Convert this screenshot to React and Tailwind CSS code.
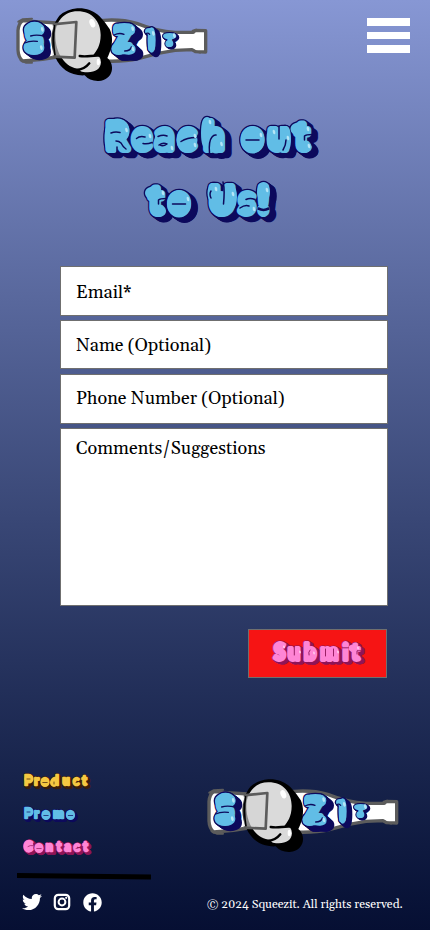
import React, { useId } from 'react';
import { FaTwitter, FaFacebook } from 'react-icons/fa';

const BLUE = { fill: '#61bde6', edge: '#0d0a5c', shine: '#b5e5f7' };
const PINK = { fill: '#ff85d5', edge: '#8f1457', shine: '#ffd0f0' };
const GOLD = { fill: '#f5c842', edge: '#3b1d0a', shine: '#ffedb0' };

// Inflated lettering: a dropped shadow, a dark rim and a swollen face.
// `at` holds the centre of each character, `puffs` the balloon bellies
// [cx, cy, rx, ry] and `creases` the folds drawn over the face.
function Bubble({ text, at, y, size, swell, rim, drop, colors, squash = 0.9, puffs = [], creases, crease = 1.5 }) {
  const id = useId();
  const href = `#${id}`;
  return (
    <g strokeLinejoin="round" strokeLinecap="round">
      <g fill={colors.edge} stroke={colors.edge} strokeWidth={swell + rim}>
        {[1, 0.75, 0.5, 0.25, 0].map((s) => (
          <use key={s} href={href} x={drop * s} y={drop * s * 0.75} />
        ))}
      </g>
      <use href={href} fill={colors.fill} stroke={colors.fill} strokeWidth={swell} />
      <defs>
        <g id={id}>
          {puffs.map(([cx, cy, rx, ry]) => (
            <ellipse key={`${cx}-${cy}`} cx={cx} cy={cy} rx={rx - swell / 2} ry={ry - swell / 2} />
          ))}
          <text
            x={at.map((v) => v / squash).join(' ')}
            y={y}
            transform={`scale(${squash} 1)`}
            textAnchor="middle"
            fontSize={size}
            className='font-["Lato","Open_Sans",sans-serif] font-black'
          >
            {text}
          </text>
        </g>
      </defs>
      {creases && <path d={creases} fill="none" stroke={colors.edge} strokeWidth={crease} />}
    </g>
  );
}

function Shine({ points, color, r = 1.6 }) {
  return points.map(([x, y]) => (
    <ellipse key={`${x}-${y}`} cx={x} cy={y} rx={r} ry={r * 1.8} fill={color} transform={`rotate(-14 ${x} ${y})`} />
  ));
}

function Logo() {
  return (
    <svg viewBox="45 21 582 225" className="block h-[75px] w-[194px]" role="img">
      <path d="M68 62 Q120 66 170 69 L310 61 Q365 57 410 70 Q470 94 525 97 L580 97 L586 91 L617 92 L617 156 L586 155 L576 149 L525 151 Q470 158 415 176 Q370 186 310 183 L170 171 Q120 181 68 183 Q55 172 54 150 L54 92 Q56 68 68 62Z" fill="#fff" stroke="#5c5c5c" strokeWidth="10" strokeLinejoin="round" />
      <path d="M55 65 L68 58 L96 56 M62 181 L78 188 L96 188 M578 92 L590 89 M576 150 L600 158" fill="none" stroke="#5c5c5c" strokeWidth="6" strokeLinecap="round" />
      <Bubble text="S" at={[102]} y={151} size={97} swell={26} rim={8} drop={16} colors={BLUE} squash={0.82}
        puffs={[[103, 89, 31, 22], [102, 143, 31, 22]]} crease={4}
        creases="M92 108Q108 103 132 108M74 129Q90 121 112 124" />
      <Bubble text="Z" at={[369]} y={150} size={90} swell={26} rim={8} drop={19} colors={BLUE} squash={0.82}
        puffs={[[373, 89, 33, 20], [356, 146, 22, 19], [386, 148, 21, 16]]} crease={4}
        creases="M342 105Q358 97 372 103M374 153Q391 153 394 141" />
      <Bubble text="I" at={[454]} y={146} size={64} swell={12} rim={8} drop={13} colors={BLUE} squash={0.9}
        puffs={[[448, 94, 13, 10], [455, 120, 12, 38]]} crease={4} creases="M437 101Q444 97 449 103" />
      <Bubble text="T" at={[509]} y={133} size={34} swell={10} rim={6} drop={6} colors={BLUE} squash={0.95}
        puffs={[[509, 108, 20, 9], [508, 131, 12, 10]]} />
      <path d="M232 25 C284 23 306 54 329 87 C345 121 330 158 322 174 C346 193 341 240 296 243 Q269 244 254 226 C211 228 181 207 166 172 C145 126 155 76 178 47 Q202 27 232 25Z" fill="#000" />
      <path d="M232 34 C278 34 302 66 302 105 C302 138 289 153 280 165 Q302 163 303 187 C301 213 278 220 246 215 Q237 212 240 206 C197 207 166 160 166 106 C166 64 193 34 232 34Z" fill="#dadada" />
      <path d="M239 168 C263 172 276 165 300 167 M228 211 C246 209 258 203 268 190" fill="none" stroke="#000" strokeWidth="7" strokeLinecap="round" />
      <ellipse cx="277" cy="70" rx="8" ry="13" fill="#fff" transform="rotate(-22 277 70)" />
      <ellipse cx="295" cy="186" rx="5" ry="10" fill="#fff" />
      <path d="M158 73 L229 66 L224 173 L158 170" fill="#d4d4d4" fillOpacity=".65" stroke="#5c5c5c" strokeWidth="8" strokeLinejoin="round" />
      <path d="M164 75 Q157 120 165 166" stroke="#000" strokeWidth="5" fill="none" />
      <Shine points={[[127, 88], [124, 143], [398, 86], [399, 147], [460, 100], [523, 107]]} color={BLUE.shine} r={4} />
    </svg>
  );
}

function Field({ label, box }) {
  return <label className={`block border border-[#6f6f6f] bg-white px-[15px] text-[18px] text-black ${box}`}>{label}</label>;
}

function NavWord({ text, at, colors, puffs, creases }) {
  return (
    <a className="block">
      <svg width="80" height="33" viewBox="20 768 80 33" className="block">
        <Bubble text={text} at={at} y={785.5} size={14} swell={2.4} rim={1.1} drop={2.2} colors={colors} puffs={puffs} creases={creases} crease={0.7} />
      </svg>
    </a>
  );
}

export default function App() {
  return (
    <div className='flex h-[930px] w-[430px] flex-col bg-linear-to-b from-[#8797d4] to-[#060f33] font-["Georgia","Gelasio","Liberation_Serif",serif]'>
      <header className="flex h-[108px] items-start justify-between pt-[7px] pr-5 pl-[15px]">
        <Logo />
        <button className="mt-[11px] flex w-[43px] flex-col gap-[6px]" aria-label="Menu">
          <span className="h-[7.5px] w-full bg-white" />
          <span className="h-[7.5px] w-full bg-white" />
          <span className="h-[7.5px] w-full bg-white" />
        </button>
      </header>

      <h1 className="h-[158px]">
        <svg width="430" height="124" viewBox="0 108 430 124" className="block">
          <Bubble text="Reach" at={[117, 142, 164.5, 187, 214]} y={149} size={36} swell={8} rim={2.6} drop={5.5} colors={BLUE}
            puffs={[[117.5, 131, 12, 12.5], [111, 138, 6.5, 14], [142, 140, 10.5, 13], [164, 140, 9.5, 13], [187, 140, 10.5, 13], [216, 141, 8, 12.5], [207, 133, 6, 16]]}
            creases="M111 133Q115 131.5 120 132.5M116 141Q119 141 121 143Q123 147 126 149M117 147V153M136.5 138.5Q140 135.5 145 137M143 143.5Q147 144.5 152 142.5M158 136.5Q163 134.5 167 136M159 145Q163 142 167 144Q163 147 160 145M181 141.5Q187 137.5 196 137.5M209.5 153Q208.5 141 212 137Q214 134.5 216 135" />
          <Bubble text="out" at={[252.5, 278.5, 302]} y={149} size={36} swell={8} rim={2.6} drop={5.5} colors={BLUE}
            puffs={[[252.5, 140, 12, 13.5], [273, 139, 6.5, 12], [285, 139, 6, 13], [299, 129, 8.5, 6.5], [304, 147, 7.5, 6]]}
            creases="M246 140H259M279 126V139M283 150Q286 145 286 140M312 134.5Q306 134.5 304.5 136V140" />
          <Bubble text="to" at={[156, 179]} y={213} size={36} swell={8} rim={2.6} drop={5.5} colors={BLUE}
            puffs={[[153.5, 193, 8.5, 6.5], [158.5, 211, 7.5, 6], [179, 204, 12, 13.5]]}
            creases="M166 198.5Q160 198.5 158.5 200V204M172.5 204H185.5" />
          <Bubble text="Us!" at={[222, 247, 263.5]} y={213} size={36} swell={8} rim={2.6} drop={5.5} colors={BLUE}
            puffs={[[214, 193, 6.5, 10], [221, 204, 11, 13], [230, 197, 7, 13], [263.5, 192, 6.5, 10]]}
            creases="M223 182Q225 189 223.5 204M211 198Q209 194 211 191M246 199.5Q250 197.5 255 199.5M240 208Q245 204.5 249 206M258 209Q263.5 211.8 269 209M258.5 208Q263.5 210.8 268.5 208" />
          <Shine points={[[126.5, 130], [150, 136], [172, 148], [195, 136], [195, 145], [210, 122], [221.5, 144], [261, 135], [274, 132], [288, 138], [308, 129], [309, 146], [163, 193], [188, 199], [216, 189], [233, 194], [254, 209], [267, 190]]} color={BLUE.shine} r={1.3} />
        </svg>
      </h1>

      <form className="flex w-[388px] flex-col pl-[60px]">
        <Field label="Email*" box="h-[50px] leading-[52px]" />
        <Field label="Name (Optional)" box="mt-1 h-[49px] leading-[49px]" />
        <Field label="Phone Number (Optional)" box="mt-[5px] h-[50px] leading-[48px]" />
        <Field label="Comments/Suggestions" box="mt-1 h-[178px] leading-[40px]" />
        <button type="button" className="mt-[23px] mr-px h-[49px] w-[139px] self-end border border-[#6f6f6f] bg-[#f61414]">
          <svg width="137" height="47" viewBox="249 630 137 47" className="block">
            <Bubble text="Submit" at={[279.5, 294, 310, 329.5, 345.5, 355.5]} y={660} size={23} swell={3.8} rim={1.2} drop={3.3} colors={PINK} squash={0.92}
              puffs={[[291, 654, 3.5, 7], [310, 655, 6, 7], [353.5, 648, 5, 3.5]]}
              creases="M294.3 646V655M309 655Q308 652 310 650M325.5 649V656M333.5 649V656M342.5 647.8H348.5M361 650.8H357V654" crease={0.9} />
            <Shine points={[[284, 647], [300, 652], [314, 653], [338, 652], [358, 648]]} color={PINK.shine} r={0.8} />
          </svg>
        </button>
      </form>

      <footer className="mt-[90px] flex flex-1 justify-between pl-[17px]">
        <div className="flex w-[134px] flex-col">
          <nav className="pl-[3px]">
            <NavWord text="Product" at={[28.3, 36.7, 45, 55, 66, 76, 84.5]} colors={GOLD}
              puffs={[[29, 779, 4.5, 4.5], [45, 782.5, 4.5, 4.5], [54, 782.5, 4, 4.5]]}
              creases="M27 779H30M42.8 782.5H47.2M54 782V784M76 782.5L79 781.5" />
            <NavWord text="Promo" at={[28.3, 36.7, 46, 58.5, 70.5]} colors={BLUE}
              puffs={[[29, 779, 4.5, 4.5], [46, 782.5, 4.5, 4.5], [70.5, 782.5, 4.5, 4.5]]}
              creases="M27 779H30M43.8 782.5H48.2M68.3 782.5H72.7" />
            <NavWord text="Contact" at={[28.5, 39, 49.3, 59, 67.8, 76.7, 85.3]} colors={PINK}
              puffs={[[28.5, 780.5, 5, 6.3], [39, 782.5, 4.5, 4.5]]}
              creases="M28 780.5Q30 779 33 779.6M36.8 782.5H41.2M76 782.5L79.5 781.5" />
          </nav>
          <svg width="134" height="7" viewBox="0 0 134 7" className="mt-[6px] block"><path d="M0 0L134 1.5V6.5L0 5Z" fill="#000" /></svg>
          <div className="mt-[12px] flex items-center pl-[5px] text-white">
            <FaTwitter className="size-5" />
            <svg viewBox="0 0 18 18" className="ml-[11px] size-[18px]" fill="none" stroke="currentColor">
              <rect x="1.8" y="1.8" width="14.4" height="14.4" rx="3.6" strokeWidth="2.2" />
              <circle cx="9" cy="9" r="3.4" strokeWidth="2" />
              <circle cx="13.2" cy="4.8" r="1.1" fill="currentColor" stroke="none" />
            </svg>
            <FaFacebook className="ml-[12px] size-[19px]" />
          </div>
        </div>
        <div className="flex w-[224px] flex-col pt-[10px]">
          <Logo />
          <p className="mt-[42px] pl-px text-[12px] leading-[20px] whitespace-nowrap text-white">© 2024 Squeezit. All rights reserved.</p>
        </div>
      </footer>
    </div>
  );
}
